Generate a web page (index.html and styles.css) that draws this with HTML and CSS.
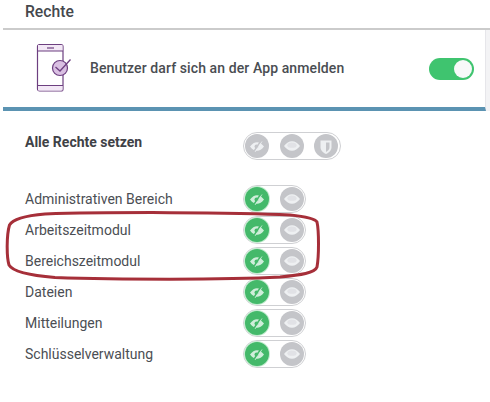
FILE: index.html
```html
<!DOCTYPE html>
<html lang="de">
<head>
<meta charset="utf-8">
<title>Rechte</title>
<link rel="stylesheet" href="styles.css">
</head>
<body>
<svg width="0" height="0" class="defs">
  <defs>
    <symbol id="eye" viewBox="0 0 24 24">
      <path d="M4 12c2.400-3.200 5-4.800 8-4.800s5.600 1.600 8 4.800c-2.400 3.200-5 4.800-8 4.800s-5.600-1.600-8-4.800z" fill="#eef0f2"/>
      <ellipse cx="12" cy="11.200" rx="4.600" ry="2.600" fill="currentColor" opacity=".3"/>
    </symbol>
    <symbol id="eye-off" viewBox="0 0 24 24">
      <path class="pale" d="M5 12.500c2.200-2.900 4.500-4.300 7-4.300s4.800 1.400 7 4.300c-2.200 2.900-4.500 4.300-7 4.300s-4.800-1.400-7-4.300z"/>
      <circle cx="11.500" cy="12.500" r="2" fill="currentColor"/>
      <path d="M16.500 6 8.500 18" stroke="currentColor" stroke-width="1.500"/>
      <path class="pale-line" d="M17 7.500 10 18" stroke-width=".8"/>
    </symbol>
    <symbol id="shield" viewBox="0 0 24 24">
      <path d="M6.500 6.500h11v6.500c0 3.500-2.300 5.500-5.500 7-3.200-1.500-5.500-3.500-5.500-7z" fill="#eef0f2"/>
      <path d="M12 8.500h3.500v4.500c0 2.500-1.500 3.800-3.500 5z" fill="#c4c5c9"/>
    </symbol>
  </defs>
</svg>

<main class="page">
  <h1 class="title">Rechte</h1>

  <section class="app-login">
    <svg class="phone" viewBox="0 0 36 50" width="36" height="50" aria-hidden="true">
      <rect x="1.500" y="1.500" width="25.500" height="46.500" rx="2" fill="#ffffff" stroke="#6d3f80" stroke-width="1.200"/>
      <path d="M2 2h24.500v6H2z" fill="#f3e8f6"/>
      <path d="M2 42.500h24.500v5H2z" fill="#f3e8f6"/>
      <path d="M1.500 8h25.500M1.500 42.500h25.500" stroke="#6d3f80" stroke-width="1.200"/>
      <path d="M11 5h7" stroke="#6d3f80" stroke-width="1.200"/>
      <circle cx="24" cy="25" r="7.500" fill="#d9bfe2" stroke="#6d3f80" stroke-width="1.200"/>
      <path d="M19.500 24l4.500 4 10.500-11.500" fill="none" stroke="#6d3f80" stroke-width="1.300"/>
    </svg>
    <span class="app-label">Benutzer darf sich an der App anmelden</span>
    <span class="switch"><span class="knob"></span></span>
  </section>

  <section class="rights">
    <div class="row row-all">
      <span class="label strong">Alle Rechte setzen</span>
      <span class="pill pill-3">
        <span class="dot"><svg><use href="#eye-off"/></svg></span>
        <span class="dot"><svg><use href="#eye"/></svg></span>
        <span class="dot"><svg><use href="#shield"/></svg></span>
      </span>
    </div>

    <div class="list">
      <div class="row"><span class="label">Administrativen Bereich</span><span class="pill"><span class="dot on"><svg><use href="#eye-off"/></svg></span><span class="dot"><svg><use href="#eye"/></svg></span></span></div>
      <div class="row"><span class="label">Arbeitszeitmodul</span><span class="pill"><span class="dot on"><svg><use href="#eye-off"/></svg></span><span class="dot"><svg><use href="#eye"/></svg></span></span></div>
      <div class="row"><span class="label">Bereichszeitmodul</span><span class="pill"><span class="dot on"><svg><use href="#eye-off"/></svg></span><span class="dot"><svg><use href="#eye"/></svg></span></span></div>
      <div class="row"><span class="label">Dateien</span><span class="pill"><span class="dot on"><svg><use href="#eye-off"/></svg></span><span class="dot"><svg><use href="#eye"/></svg></span></span></div>
      <div class="row"><span class="label">Mitteilungen</span><span class="pill"><span class="dot on"><svg><use href="#eye-off"/></svg></span><span class="dot"><svg><use href="#eye"/></svg></span></span></div>
      <div class="row"><span class="label">Schlüsselverwaltung</span><span class="pill"><span class="dot on"><svg><use href="#eye-off"/></svg></span><span class="dot"><svg><use href="#eye"/></svg></span></span></div>
    </div>
  </section>

  <svg class="annotation" viewBox="0 0 316 72" width="316" height="72" aria-hidden="true">
    <path d="M40 3C100 1 230 1 285 4 300 5.500 310 7.500 312 11 314 20 314 45 312 56 310 62 296 64 275 66 220 69 110 68.500 50 66.500 25 64.500 8 61 4 54 1.500 46 1.500 24 4.500 14 8 8 22 4.500 40 3z" fill="none" stroke="#a62f39" stroke-width="3"/>
  </svg>
</main>
</body>
</html>
```

FILE: styles.css
```css
* {
  box-sizing: border-box;
}

html,
body {
  margin: 0;
  height: 100%;
  background: #ffffff;
}

body {
  font-family: Roboto, "Liberation Sans", sans-serif;
  color: #45484d;
  overflow: hidden;
}

.defs {
  position: absolute;
}

.pale {
  fill: var(--pale);
}

.pale-line {
  stroke: var(--pale);
}

.page {
  position: relative;
  width: 490px;
  height: 402px;
  padding-left: 3px;
}

.title {
  margin: 0;
  height: 30px;
  padding: 3px 0 0 22px;
  font-size: 15.700px;
  line-height: 18px;
  font-weight: 500;
  border-bottom: 2px solid #cbcbcb;
}

.app-login {
  display: flex;
  align-items: center;
  width: 483px;
  height: 81px;
  padding: 0 11px 0 33px;
  border-right: 1px solid #e6e6ea;
  border-bottom: 4px solid #5b93b2;
  box-shadow: 4px 0 0 #f3f3f5;
}

.phone {
  flex: none;
  margin-top: -1px;
}

.app-label {
  margin-left: 18px;
  margin-bottom: 2px;
  font-size: 14px;
  font-weight: 500;
  flex: 1;
  letter-spacing: 0.100px;
  color: #4a4d52;
}

.switch {
  display: flex;
  align-items: center;
  justify-content: flex-end;
  width: 45px;
  height: 22px;
  padding-right: 2px;
  border-radius: 11px;
  background: #3fc46f;
}

.knob {
  width: 18px;
  height: 18px;
  border-radius: 50%;
  background: #f7f9f9;
}

.rights {
  padding: 21px 0 0 22px;
}

.row {
  display: flex;
  align-items: center;
  height: 31px;
}

.row-all {
  margin-bottom: 23px;
  height: 28px;
}

.label {
  width: 218px;
  font-size: 14px;
  color: #4b4e53;
}

.strong {
  font-weight: 700;
  font-size: 14px;
  color: #3f4247;
  margin-top: -8px;
}

.pill {
  display: flex;
  align-items: center;
  gap: 11px;
  height: 28px;
  padding: 0 1px;
  border: 1px solid #cfd0d3;
  border-radius: 14px;
}

.pill-3 {
  padding-right: 2px;
  gap: 10.500px;
}

.dot {
  display: flex;
  width: 24px;
  height: 24px;
  border-radius: 50%;
  background: #c4c5c9;
  color: #c4c5c9;
  --pale: #eef0f2;
}

.dot svg {
  width: 24px;
  height: 24px;
}

.on {
  background: #44b96a;
  color: #44b96a;
  box-shadow: 0 0 0 1px #c4ecd0;
  --pale: #cfeeda;
}

.annotation {
  position: absolute;
  left: 5px;
  top: 211px;
}
```
